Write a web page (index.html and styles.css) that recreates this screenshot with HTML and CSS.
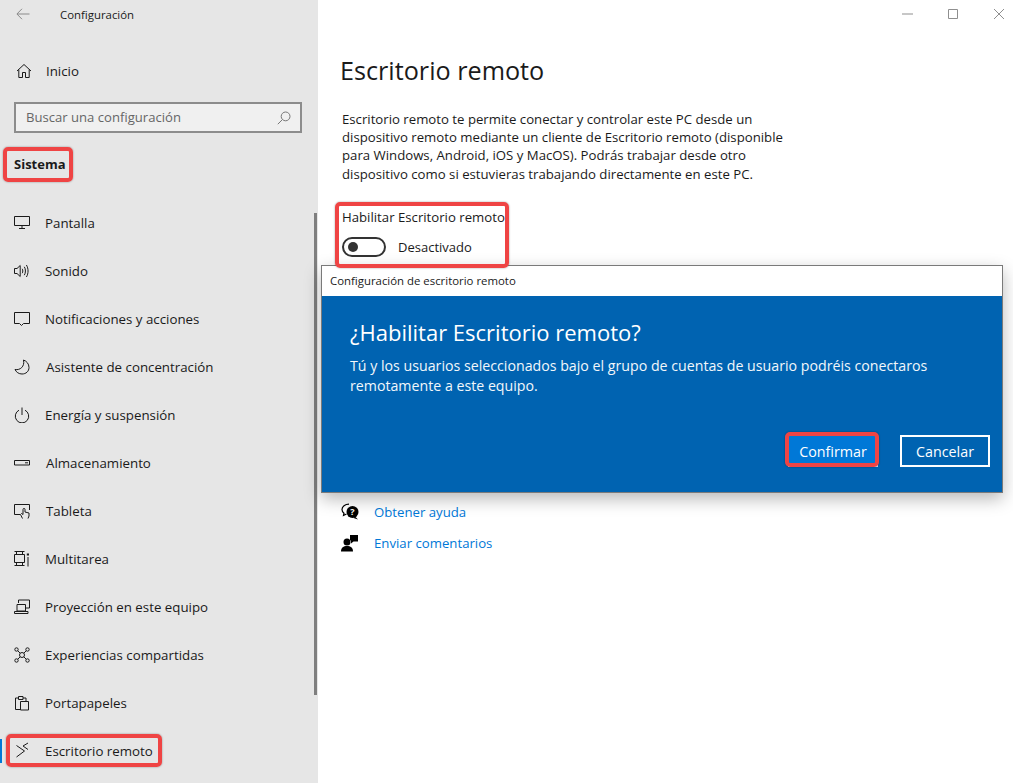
FILE: index.html
```html
<!DOCTYPE html>
<html lang="es">
<head>
<meta charset="utf-8">
<title>Configuración</title>
<link rel="stylesheet" href="styles.css">
</head>
<body>
<div class="window">
  <aside class="sidebar">
    <header class="apphead">
      <svg class="back" width="14" height="12" viewBox="0 0 14 12"><path d="M13.5 6H1M6 .8 .9 6 6 11.2"/></svg>
      <span>Configuración</span>
    </header>
    <div class="home">
      <svg class="ico" width="16" height="16" viewBox="0 0 16 16"><path d="M1 8 8 1.5 15 8M2.8 6.6V14.5H6.5V9.5H9.5V14.5H13.2V6.6"/></svg>
      <span>Inicio</span>
    </div>
    <div class="search">
      <span>Buscar una configuración</span>
      <svg width="14" height="14" viewBox="0 0 14 14"><circle cx="8.6" cy="5.4" r="4.4"/><path d="M5.4 8.6 .8 13.2"/></svg>
    </div>
    <h2 class="section">Sistema</h2>
    <nav class="nav">
      <a class="item"><svg class="ico" width="16" height="16" viewBox="0 0 16 16"><path d="M.5 1.500H15.500V10.500H.5ZM8 10.500V13M5 13.500H11"/></svg><span>Pantalla</span></a>
      <a class="item"><svg class="ico" width="16" height="16" viewBox="0 0 16 16"><path d="M.5 5.500H3L6.200 2.500V13.500L3 10.500H.5ZM8.200 5.800C9 7 9 9 8.200 10.200M10.300 3.800C11.800 6 11.800 10 10.300 12.200M12.400 2C14.600 5.500 14.600 10.500 12.400 14"/></svg><span>Sonido</span></a>
      <a class="item"><svg class="ico" width="16" height="16" viewBox="0 0 16 16"><path d="M.5 1.500H15.500V12.500H9.500L7.500 14.500 5.500 12.500H.5Z"/></svg><span>Notificaciones y acciones</span></a>
      <a class="item tight"><svg class="ico" width="16" height="16" viewBox="0 0 16 16"><path d="M9.500 1C12.500 2 15 4.800 15 8.500 15 12.300 12 15 8 15 4.800 15 2.200 13.200 1 10.500 6 11.500 11 7.500 9.500 1Z"/></svg><span>Asistente de concentración</span></a>
      <a class="item"><svg class="ico" width="16" height="16" viewBox="0 0 16 16"><path d="M5 3.200A6.700 6.700 0 1 0 11 3.200M8 .5V8"/></svg><span>Energía y suspensión</span></a>
      <a class="item tight"><svg class="ico" width="16" height="16" viewBox="0 0 16 16"><path d="M.5 5.500H15.500V10H.5ZM11 7.800H14"/></svg><span>Almacenamiento</span></a>
      <a class="item tight"><svg class="ico" width="16" height="16" viewBox="0 0 16 16"><path d="M6 11.500H.5V1.500H15.500V7M8.500 15.500 6.500 11.500 7.500 10.500 9 11.500V6.500C9 5 11 5 11 6.500V9L15 10V13L14 15.500"/></svg><span>Tableta</span></a>
      <a class="item"><svg class="ico" width="16" height="16" viewBox="0 0 16 16"><path d="M.5 .5H10.500M.5 3.500H10.500V11.500H.5ZM.5 14.500H10.500M14 6V15.500M2.500 .5V3.500M8.500 .5V3.500M2.500 11.500V14.500M8.500 11.500V14.500"/><path class="solid" d="M12.800 2.500H15V4.500H12.800Z"/></svg><span>Multitarea</span></a>
      <a class="item"><svg class="ico" width="16" height="16" viewBox="0 0 16 16"><path d="M4.500 4V1H15.500V9H12M3 5.500H11.500V12H3ZM.5 14.500H14V12.500H.5Z"/></svg><span>Proyección en este equipo</span></a>
      <a class="item"><svg class="ico" width="16" height="16" viewBox="0 0 16 16"><circle cx="2.500" cy="2.500" r="1.700"/><circle cx="13.500" cy="2.500" r="1.700"/><circle cx="2.500" cy="13.500" r="1.700"/><circle cx="13.500" cy="13.500" r="1.700"/><circle cx="8" cy="8" r="2.500"/><path d="M3.800 3.800 6.200 6.200M12.200 3.800 9.800 6.200M3.800 12.200 6.200 9.800M12.200 12.200 9.800 9.800"/></svg><span>Experiencias compartidas</span></a>
      <a class="item"><svg class="ico" width="16" height="16" viewBox="0 0 16 16"><path d="M4.500 3H1.500V14.500H6.500M9 3H12V6M4.500 3V1.500H9V3M4.500 3V4.500H9V3M6.500 6.500H14.500V15H6.500Z"/></svg><span>Portapapeles</span></a>
      <a class="item current"><svg class="ico remote" width="16" height="16" viewBox="0 0 16 16"><path d="M2.500 2.500 10.500 8 2.500 14M14 0 9 3 14 6.500"/></svg><span>Escritorio remoto</span></a>
    </nav>
    <div class="scrollbar"></div>
  </aside>

  <main class="main">
    <div class="controls">
      <svg width="14" height="14" viewBox="0 0 14 14"><path d="M2 7H13"/></svg>
      <svg width="14" height="14" viewBox="0 0 14 14"><path d="M2.500 2.500H11.500V11.500H2.500Z"/></svg>
      <svg width="14" height="14" viewBox="0 0 14 14"><path d="M2 2 12 12M12 2 2 12"/></svg>
    </div>
    <h1 class="title">Escritorio remoto</h1>
    <p class="desc">Escritorio remoto te permite conectar y controlar este PC desde un dispositivo remoto mediante un cliente de Escritorio remoto (disponible para Windows, Android, iOS y MacOS). Podrás trabajar desde otro dispositivo como si estuvieras trabajando directamente en este PC.</p>
    <div class="setting">
      <div class="setting-label">Habilitar Escritorio remoto</div>
      <div class="toggle-row"><span class="toggle"><span class="knob"></span></span><span>Desactivado</span></div>
    </div>
    <ul class="links">
      <li><svg width="18" height="18" viewBox="0 0 18 18"><path class="line" d="M8 1.200C4 1.200 1 3.500 1 6.500 1 8 1.800 9.300 3 10.200L2.500 12.500 5.500 11"/><circle class="fill" cx="11.500" cy="9" r="6"/><path class="fill" d="M14 13.500 17 16.500 12.500 15Z"/><text x="11.500" y="12" class="q">?</text></svg><a>Obtener ayuda</a></li>
      <li><svg width="18" height="18" viewBox="0 0 18 18"><circle class="fill" cx="6" cy="8" r="3.500"/><path class="fill" d="M0 17.500C0 13.500 2.500 12 6 12S12 13.500 12 17.500Z"/><path class="fill" d="M9 1H17V7.500H12.500L10 9.500V6.500H9Z"/></svg><a>Enviar comentarios</a></li>
    </ul>
  </main>
</div>

<section class="dialog">
  <div class="dialog-title">Configuración de escritorio remoto</div>
  <div class="dialog-body">
    <h2 class="dialog-head">¿Habilitar Escritorio remoto?</h2>
    <p class="dialog-text">Tú y los usuarios seleccionados bajo el grupo de cuentas de usuario podréis conectaros remotamente a este equipo.</p>
    <div class="dialog-actions">
      <button class="btn primary">Confirmar</button>
      <button class="btn outline">Cancelar</button>
    </div>
  </div>
</section>

<div class="mark mark-sistema"></div>
<div class="mark mark-remoto"></div>
<div class="mark mark-toggle"></div>
<div class="mark mark-confirm"></div>
</body>
</html>
```
FILE: styles.css
```css
* { box-sizing: border-box; }
html, body { margin: 0; height: 100%; }
body {
  width: 1013px;
  height: 783px;
  overflow: hidden;
  position: relative;
  background: #fff;
  color: #1a1a1a;
  font-family: "Open Sans", "Liberation Sans", sans-serif;
  font-size: 13.3px;
}
svg { fill: none; stroke: currentColor; stroke-width: 1; flex: none; }

.window { display: grid; grid-template-columns: 318px 1fr; height: 783px; }

.sidebar { background: #e6e6e6; position: relative; }
.apphead { display: flex; align-items: center; height: 28px; padding-left: 16px; font-size: 11.4px; }
.apphead .back { color: #8a8a8a; margin-right: 30px; }
.home { display: flex; align-items: center; height: 24px; margin-top: 31px; padding-left: 16px; }
.home .ico { margin-right: 14px; }
.search {
  display: flex; align-items: center; justify-content: space-between;
  width: 288px; height: 31px; margin: 19px 0 0 14px; padding: 0 9px 0 10px;
  background: #f0f0f0; border: 2px solid #8c8c8c; color: #666; font-size: 13.1px;
}
.search svg { color: #777; }
.search span { position: relative; top: -1px; }
.section { margin: 21px 0 0 14px; height: 20px; font-size: 13px; line-height: 20px; font-weight: 700; color: #1a1a1a; }
.nav { margin-top: 25px; }
.item { display: flex; align-items: center; height: 48px; padding-left: 14px; }
.item .ico { margin-right: 15px; }
.item.tight .ico { margin-right: 16px; }
.item .solid { fill: currentColor; stroke: none; }
.item .remote { overflow: visible; }
.scrollbar { position: absolute; left: 314px; top: 213px; width: 3px; height: 482px; background: #7f7f7f; }
.current { position: relative; }
.current::before { content: ""; position: absolute; left: 0; top: 12px; width: 2px; height: 24px; background: #0078d7; }

.main { padding-left: 22px; position: relative; }
.controls { position: absolute; top: 7px; right: 7px; display: flex; gap: 32px; color: #8f8f8f; }
.title { margin: 52px 0 0; height: 36px; font-size: 25.2px; line-height: 36px; font-weight: 400; color: #1a1a1a; }
.desc { margin: 22px 0 0 2px; width: 450px; font-size: 13.2px; line-height: 18.2px; }
.setting { margin: 25px 0 0 2px; }
.setting-label { font-size: 13.2px; line-height: 18px; }
.toggle-row { display: flex; align-items: center; margin-top: 11px; gap: 12px; font-size: 13px; }
.toggle { display: flex; align-items: center; width: 44px; height: 20px; border: 2px solid #333; border-radius: 10px; padding-left: 4px; }
.knob { width: 10px; height: 10px; border-radius: 50%; background: #333; }
.links { list-style: none; margin: 0; padding: 0; position: absolute; left: 23px; top: 496px; color: #000; }
.links li { display: flex; align-items: center; gap: 15px; height: 31px; }
.links a { color: #0078d7; font-size: 13.2px; }
.links .fill { fill: #000; stroke: none; }
.links .line { stroke: #000; stroke-width: 1.200; }
.links .q { fill: #fff; stroke: none; font-size: 9px; font-weight: 700; text-anchor: middle; }

.dialog {
  position: absolute; left: 321px; top: 265px; width: 682px; height: 228px;
  border: 1px solid #7a7a7a; background: #0063b1;
  box-shadow: 0 6px 16px rgba(0,0,0,.28);
  display: flex; flex-direction: column;
}
.dialog-title { height: 30px; flex: none; background: #fff; color: #1a1a1a; font-size: 11.4px; line-height: 30px; padding-left: 8px; }
.dialog-body { flex: 1; display: flex; flex-direction: column; padding: 21px 12px 25px 28px; color: #fff; }
.dialog-head { margin: 0; font-size: 22px; line-height: 30px; font-weight: 400; }
.dialog-text { margin: 9px 0 0; width: 610px; font-size: 14.2px; line-height: 19.5px; color: #f2f7fb; }
.dialog-actions { margin-top: auto; display: flex; justify-content: flex-end; gap: 22px; align-items: flex-end; }
.btn { width: 90px; height: 32px; font: inherit; font-size: 14.3px; color: #fff; padding: 0; }
.primary { background: #0078d7; border: 1px solid #cfe0f0; }
.outline { background: transparent; border: 2px solid #fff; }

.mark { position: absolute; border: 4px solid #ef4444; border-radius: 5px; box-shadow: 0 0 2px rgba(0,0,0,.4); }
.mark-sistema { left: 3px; top: 147px; width: 70px; height: 35px; }
.mark-remoto { left: 6px; top: 734px; width: 156px; height: 33px; }
.mark-toggle { left: 335px; top: 202px; width: 174px; height: 66px; }
.mark-confirm { left: 785px; top: 432px; width: 94px; height: 35px; }
```
